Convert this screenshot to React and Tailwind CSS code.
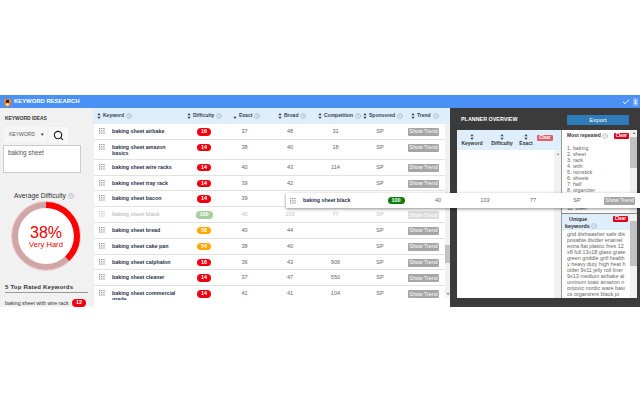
import { CircleHelp, Search, Check } from 'lucide-react'

const rows = [
  { name: 'baking sheet airbake', diff: 16, exact: 37, broad: 48, comp: 31 },
  { name: 'baking sheet amazon basics', diff: 14, exact: 38, broad: 40, comp: 18, tall: true },
  { name: 'baking sheet wire racks', diff: 14, exact: 40, broad: 43, comp: 114 },
  { name: 'baking sheet tray rack', diff: 14, exact: 39, broad: 42, comp: '' },
  { name: 'baking sheet bacon', diff: 14, exact: 39, broad: 42, comp: '' },
  { name: 'baking sheet black', diff: 100, exact: 40, broad: 103, comp: 77, faded: true },
  { name: 'baking sheet bread', diff: 58, exact: 40, broad: 44, comp: '' },
  { name: 'baking sheet cake pan', diff: 54, exact: 38, broad: 40, comp: '' },
  { name: 'baking sheet calphalon', diff: 16, exact: 36, broad: 43, comp: 906 },
  { name: 'baking sheet cleaner', diff: 14, exact: 37, broad: 47, comp: 550 },
  { name: 'baking sheet commercial grade', diff: 14, exact: 41, broad: 41, comp: 104 },
]

const repeated = ['baking', 'sheet', 'rack', 'with', 'nonstick', 'sheets', 'half', 'organizer', 'pan', 'set', 'oven']

const unique =
  'grid dishwasher safe disposable divider enamel extra flat plastic fries 12 x8 full 13x18 glass grate green griddle grill health y heavy duty high heat holder 9x11 jelly roll liner 9x13 medium airbake aluminum toaic amazon nontoxic nordic ware basics organizers black pi'

function Grip({ className }) {
  return (
    <svg width="6" height="6" viewBox="0 0 6 6" className={className} fill="currentColor">
      {[0, 2.2, 4.4].map((y) =>
        [0, 2.2, 4.4].map((x) => <rect key={`${x}-${y}`} x={x} y={y} width="1.2" height="1.2" />)
      )}
    </svg>
  )
}

function Sort({ down }) {
  return (
    <svg width="4" height="6" viewBox="0 0 4 6" className="shrink-0 text-[#33415c]" fill="currentColor">
      {!down && <path d="M2 0 L3.6 2.2 H0.4 Z" />}
      <path d="M2 6 L3.6 3.8 H0.4 Z" />
    </svg>
  )
}

function Help() {
  return <CircleHelp size={6} strokeWidth={2} className="shrink-0 text-gray-400" />
}

function Badge({ value, faded }) {
  let color = 'bg-[#f0000f]'
  if (value >= 100) color = faded ? 'bg-[#a5cfa0]' : 'bg-[#0a7d0a]'
  else if (value >= 50) color = 'bg-[#ffa800]'
  return (
    <span className={`${color} inline-flex h-[7.5px] items-center justify-center rounded-full text-[5.5px] font-bold leading-none text-white ${value >= 100 ? 'w-[17px]' : 'w-[14px]'}`}>
      {value}
    </span>
  )
}

function TrendButton({ faded }) {
  return (
    <span className={`${faded ? 'bg-[#dcdcdc]' : 'bg-[#a6a6a6]'} flex h-[8px] w-[31px] items-center justify-center whitespace-nowrap rounded-[1px] text-[5.3px] leading-none text-white`}>
      Show Trend
    </span>
  )
}

function Head({ label, className, down }) {
  return (
    <div className={`flex items-center gap-[2px] ${className}`}>
      <Sort down={down} />
      <span>{label}</span>
      <Help />
    </div>
  )
}

function Row({ row }) {
  const tone = row.faded ? 'text-[#c4c4c4]' : 'text-[#666]'
  return (
    <div className={`grid grid-cols-[18px_74px_36px_45px_46px_45px_44px_43px] items-start border-b border-[#e2e2e2] pt-[4px] text-[5.6px] leading-[7px] ${tone} ${row.tall ? 'h-[20px]' : 'h-[15.8px]'}`}>
      <Grip className={`ml-[5px] ${row.faded ? 'text-[#c4c4c4]' : 'text-[#888]'}`} />
      <div className={`w-[66px] text-[5.3px] font-bold leading-[6px] ${row.faded ? 'text-[#c4c4c4]' : 'text-[#27304c]'}`}>{row.name}</div>
      <div className="flex justify-center">
        <Badge value={row.diff} faded={row.faded} />
      </div>
      <div className="text-center">{row.exact}</div>
      <div className="text-center">{row.broad}</div>
      <div className="text-center">{row.comp}</div>
      <div className="text-center">SP</div>
      <div className="flex justify-center">
        <TrendButton faded={row.faded} />
      </div>
    </div>
  )
}

function DifficultyRing() {
  const r = 31
  const c = 2 * Math.PI * r
  return (
    <div className="relative mx-auto h-[70px] w-[70px]">
      <svg width="70" height="70" viewBox="0 0 70 70" className="-rotate-90">
        <circle cx="35" cy="35" r="34.5" fill="#fff" stroke="#f3c4c4" strokeWidth="1" />
        <circle cx="35" cy="35" r={r} fill="none" stroke="#d0a6a6" strokeWidth="6" />
        <circle cx="35" cy="35" r={r} fill="none" stroke="#ff0000" strokeWidth="6" strokeDasharray={`${c * 0.38} ${c}`} />
      </svg>
      <div className="absolute inset-0 flex flex-col items-center justify-center text-[#f00000]">
        <span className="text-[16px] leading-[17px]">38%</span>
        <span className="text-[7.6px] leading-[8px]">Very Hard</span>
      </div>
    </div>
  )
}

function Logo() {
  return (
    <svg width="9" height="10" viewBox="0 0 9 10" className="shrink-0">
      <path d="M1 1 L3 2.5 H6 L8 1 V8 L4.5 10 L1 8 Z" fill="#f08020" />
      <path d="M3 3 H6 V6 H3 Z" fill="#3a2410" />
      <circle cx="4.5" cy="7.5" r="1.3" fill="#fff" />
    </svg>
  )
}

export default function App() {
  return (
    <div className="relative h-[400px] w-[640px] overflow-hidden bg-white font-['Liberation_Sans',Arial,sans-serif]">
      <div className="h-[95px]" />

      <header className="flex h-[13px] items-center bg-[#4a90f5] pl-[3px] pr-[2px]">
        <Logo />
        <span className="ml-[2px] text-[5.9px] font-bold text-white">KEYWORD RESEARCH</span>
        <Check size={8} strokeWidth={3} className="ml-auto text-white" />
        <span className="ml-[3px] flex h-[8px] w-[5px] items-center justify-center bg-[#7fb0f8] text-[6px] font-bold leading-none text-white">1</span>
      </header>

      <div className="flex h-[199px]">
        {/* left sidebar */}
        <aside className="flex w-[94px] shrink-0 flex-col overflow-hidden bg-[#f1f1f1]">
          <div className="pl-[5px] pt-[7px] text-[4.9px] font-bold leading-[7px] text-[#333]">KEYWORD IDEAS</div>
          <div className="mt-[5px] flex gap-[2px] pl-[4px]">
            <div className="flex h-[16px] w-[43px] items-center justify-between bg-[#f6f6f6] pl-[5px] pr-[3px] text-[5px] text-[#555]">
              KEYWORD
              <span className="text-[5px] text-[#333]">▾</span>
            </div>
            <div className="flex h-[16px] w-[19px] items-center justify-center bg-[#f8f8f8]">
              <Search size={11} strokeWidth={2.5} className="text-[#222]" />
            </div>
          </div>
          <div className="ml-[3px] mt-[2px] h-[31px] w-[78px] border border-[#ccc] bg-white pl-[4px] pt-[3px] text-[6.3px] leading-[8px] text-[#555]">
            baking sheet
          </div>
          <div className="mt-[19px] flex items-center justify-center gap-[2px] pr-[6px] text-[6.7px] leading-[8px] text-[#333]">
            Average Difficulty
            <Help />
          </div>
          <div className="mt-[1px] pr-[2px]">
            <DifficultyRing />
          </div>
          <div className="ml-[5px] mt-[12px] w-[83px] border-b border-[#999] pb-[1px] text-[6px] font-bold leading-[8px] tracking-[0.2px] text-[#333]">
            5 Top Rated Keywords
          </div>
          <div className="ml-[5px] mt-[6px] flex w-[81px] items-center justify-between text-[5.3px] leading-[8px] text-[#333]">
            <span className="whitespace-nowrap">baking sheet with wire rack</span>
            <Badge value={12} />
          </div>
        </aside>

        {/* main table */}
        <main className="flex w-[356px] shrink-0">
          <div className="w-[351px]">
            <div className="grid h-[16px] grid-cols-[18px_74px_36px_45px_46px_45px_44px_43px] items-center bg-[#deeffb] text-[5px] font-bold text-[#33415c] shadow-[0_1px_1px_rgba(0,0,0,0.2)]">
              <Head label="Keyword" className="col-span-2 pl-[3px]" />
              <Head label="Difficulty" className="whitespace-nowrap pl-[1px]" />
              <Head label="Exact" className="pl-[11px]" down />
              <Head label="Broad" className="pl-[11px]" />
              <Head label="Competition" className="whitespace-nowrap pl-[5px]" />
              <Head label="Sponsored" className="whitespace-nowrap pl-[5px]" />
              <Head label="Trend" className="pl-[9px]" />
            </div>
            <div className="h-[176px] overflow-hidden bg-white">
              {rows.map((row) => (
                <Row key={row.name} row={row} />
              ))}
            </div>
          </div>
          <div className="flex h-[189px] w-[5px] flex-col justify-between bg-[#f1f1f1]">
            <div className="h-[16px] bg-[#deeffb]" />
            <div className="mt-[121px] h-[18px] bg-[#c1c1c1]" />
            <div className="mt-auto text-center text-[4px] leading-[6px] text-[#555]">▾</div>
          </div>
        </main>

        {/* planner overview */}
        <aside className="flex w-[190px] shrink-0 flex-col bg-[#3b3b3b] pl-[7px] pr-[3px]">
          <div className="flex h-[22px] items-center">
            <span className="ml-[4px] text-[5.4px] font-bold text-white">PLANNER OVERVIEW</span>
            <span className="ml-auto mr-[8px] mt-[2px] flex h-[10px] w-[62px] items-center justify-center rounded-[1px] bg-[#2f7ab8] text-[6px] text-white">
              Export
            </span>
          </div>
          <div className="flex h-[168px] bg-white">
            <div className="flex w-[105px] shrink-0 flex-col border-r border-[#999]">
              <div className="flex h-[20px] bg-[#deeffb] text-[5px] font-bold leading-[7px] text-[#333]">
                <div className="ml-[3px] flex w-[24px] flex-col items-center pt-[4px]"><Sort />Keyword</div>
                <div className="ml-[6px] flex w-[24px] flex-col items-center pt-[4px]"><Sort />Difficulty</div>
                <div className="ml-[5px] flex w-[14px] flex-col items-center pt-[4px]"><Sort />Exact</div>
                <span className="ml-[4px] mt-[5px] flex h-[6px] w-[16px] items-center justify-center rounded-[1px] bg-[#e2606a] text-[4.5px] font-bold leading-none text-white">Clear</span>
              </div>
              <div className="flex min-h-0 flex-1 justify-end">
                <div className="w-[7px] bg-[#f1f1f1] pt-[1px] text-center text-[4px] leading-[6px] text-[#777]">▴</div>
              </div>
            </div>

            <div className="flex min-w-0 flex-1 flex-col">
              <div className="flex h-[84px] overflow-hidden border-b border-[#888]">
                <div className="min-w-0 flex-1 overflow-hidden">
                  <div className="flex h-[9px] items-center gap-[1px] pl-[5px] pt-[3px] text-[5px] font-bold text-[#333]">
                    <span className="whitespace-nowrap">Most repeated</span>
                    <Help />
                    <span className="ml-[5px] flex h-[6px] w-[15px] shrink-0 items-center justify-center rounded-[1px] bg-[#e0001c] text-[4.5px] font-bold leading-none text-white">Clear</span>
                  </div>
                  <ol className="mt-[6px] pl-[5px] text-[5.3px] leading-[6px] text-[#666]">
                    {repeated.map((word, i) => (
                      <li key={word} className="whitespace-nowrap">{i + 1}. {word}</li>
                    ))}
                  </ol>
                </div>
                <div className="w-[7px] shrink-0 bg-[#f1f1f1]">
                  <div className="h-[7px] text-center text-[4px] leading-[6px] text-[#555]">▴</div>
                  <div className="h-[31px] bg-[#c1c1c1]" />
                </div>
              </div>
              <div className="flex min-h-0 flex-1">
                <div className="min-w-0 flex-1 overflow-hidden">
                  <div className="flex h-[16px] items-start bg-[#deeffb] pl-[3px] pr-[2px] pt-[2px] text-[5.4px] font-bold leading-[6.5px] text-[#333]">
                    <span className="w-[32px]">
                      <span className="block pl-[4px]">Unique</span>
                      <span className="flex items-center gap-[1px]">keywords <Help /></span>
                    </span>
                    <span className="ml-auto flex h-[6px] w-[15px] items-center justify-center rounded-[1px] bg-[#e0001c] text-[4.5px] font-bold leading-none text-white">Clear</span>
                  </div>
                  <div className="h-[68px] overflow-hidden break-all pl-[5px] pr-[4px] pt-[1px] text-[5.4px] leading-[6px] text-[#666]">
                    {unique}
                  </div>
                </div>
                <div className="w-[7px] shrink-0 bg-[#f1f1f1]">
                  <div className="h-[7px]" />
                  <div className="h-[45px] bg-[#c1c1c1]" />
                </div>
              </div>
            </div>
          </div>
        </aside>
      </div>

      {/* row being dragged */}
      <div className="absolute left-[286px] top-[193px] grid h-[15px] w-[354px] grid-cols-[17px_80px_26px_58px_36px_60px_28px_49px] items-center bg-white text-center text-[5.6px] text-[#666] shadow-[0_1px_3px_rgba(0,0,0,0.45)]">
        <Grip className="ml-[4px] text-[#888]" />
        <div className="whitespace-nowrap text-left text-[5.3px] font-bold text-[#27304c]">baking sheet black</div>
        <div className="flex justify-center"><Badge value={100} /></div>
        <div>40</div>
        <div>103</div>
        <div>77</div>
        <div>SP</div>
        <div className="flex justify-end pr-[5px]"><TrendButton /></div>
      </div>
    </div>
  )
}
